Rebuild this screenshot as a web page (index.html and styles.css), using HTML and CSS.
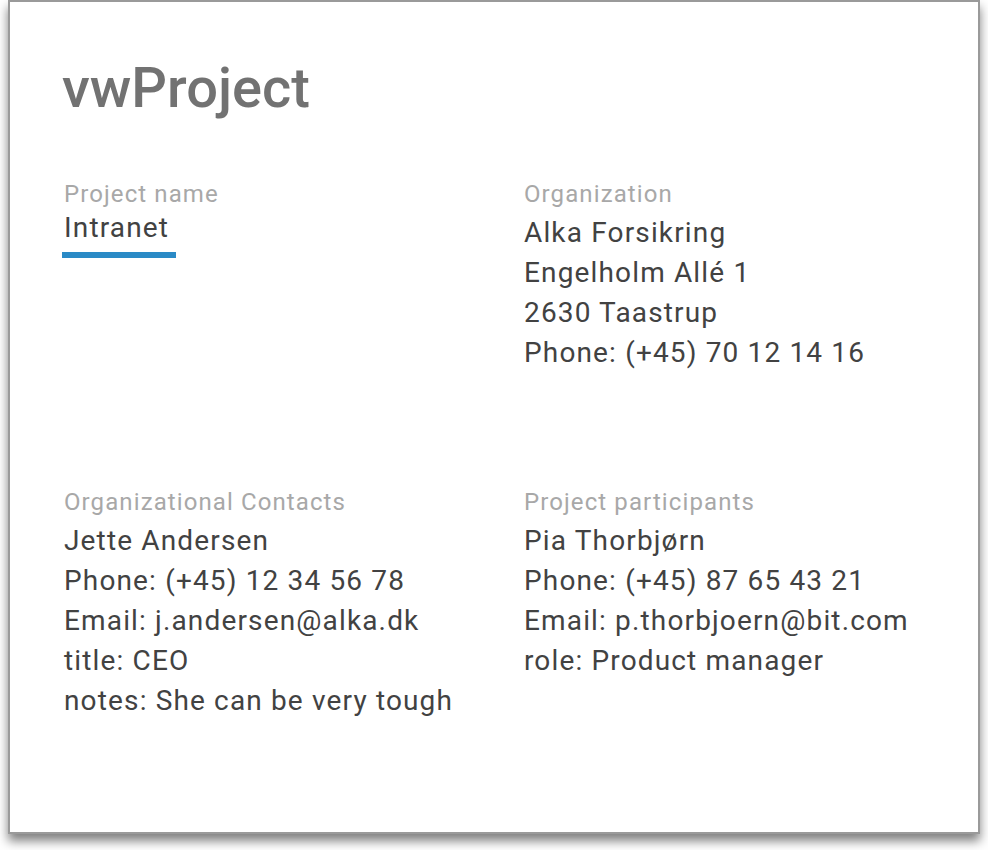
FILE: index.html
```html
<!DOCTYPE html>
<html>
<head>
<meta charset="utf-8">
<link rel="stylesheet" href="styles.css">
</head>
<body>
<div class="card">
  <h1 class="title">vwProject</h1>
  <div class="grid">
    <div class="field">
      <div class="label">Project name</div>
      <div class="input-value">Intranet</div>
      <div class="underline"></div>
    </div>
    <div class="field">
      <div class="label">Organization</div>
      <div class="value">Alka Forsikring</div>
      <div class="value">Engelholm Allé 1</div>
      <div class="value">2630 Taastrup</div>
      <div class="value">Phone: (+45) 70 12 14 16</div>
    </div>
    <div class="field">
      <div class="label">Organizational Contacts</div>
      <div class="value">Jette Andersen</div>
      <div class="value">Phone: (+45) 12 34 56 78</div>
      <div class="value">Email: j.andersen@alka.dk</div>
      <div class="value">title: CEO</div>
      <div class="value">notes: She can be very tough</div>
    </div>
    <div class="field">
      <div class="label">Project participants</div>
      <div class="value">Pia Thorbjørn</div>
      <div class="value">Phone: (+45) 87 65 43 21</div>
      <div class="value">Email: p.thorbjoern@bit.com</div>
      <div class="value">role: Product manager</div>
    </div>
  </div>
</div>
</body>
</html>
```

FILE: styles.css
```css
html, body {
  margin: 0;
  padding: 0;
  background: #ffffff;
}
body {
  padding: 0 8px 16px 8px;
  min-height: 850px;
  box-sizing: border-box;
  font-family: Roboto, "Liberation Sans", sans-serif;
}
.card {
  box-sizing: border-box;
  width: 972px;
  height: 834px;
  border: 2px solid #9a9a9a;
  background: #ffffff;
  box-shadow: 0 7px 10px rgba(0, 0, 0, 0.5);
  padding: 58px 52px 0 52px;
}
.title {
  margin: 0;
  font-size: 56px;
  line-height: 56px;
  font-weight: 500;
  color: #727272;
}
.grid {
  margin-top: 59px;
  display: grid;
  grid-template-columns: 460px 460px;
  row-gap: 110px;
  padding-left: 2px;
}
.label {
  font-size: 24px;
  line-height: 38px;
  letter-spacing: 1.1px;
  color: #a8a8a8;
}
.value {
  font-size: 28px;
  line-height: 40px;
  letter-spacing: 1.15px;
  color: #424242;
}
.input-value {
  font-size: 28px;
  line-height: 30px;
  letter-spacing: 1.15px;
  color: #424242;
}
.underline {
  margin-top: 9px;
  margin-left: -2px;
  width: 114px;
  height: 6px;
  background: #2a8ac6;
}
```
